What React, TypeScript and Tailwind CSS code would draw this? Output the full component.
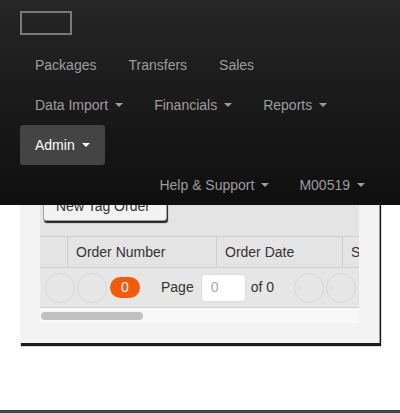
import type { ReactNode } from "react"

function Caret() {
  return <span className="ml-[7px] inline-block h-0 w-0 border-x-4 border-t-4 border-x-transparent border-t-current align-middle" />
}

function NavItem({ children, active, dropdown }: { children: ReactNode; active?: boolean; dropdown?: boolean }) {
  return (
    <div
      className={
        active
          ? "flex h-10 items-center whitespace-nowrap rounded-[3px] bg-[#444444] px-[15px] text-white"
          : "flex h-10 items-center whitespace-nowrap px-[15px] text-[#9d9d9d]"
      }
    >
      {children}
      {dropdown && <Caret />}
    </div>
  )
}

function Circle() {
  return <div className="h-[30px] w-[30px] shrink-0 rounded-full border border-[#d6d6d6]" />
}

export default function App() {
  return (
    <div className="relative h-[413px] w-[400px] overflow-hidden bg-white font-['Liberation_Sans',Arial,sans-serif] text-[14px]">
      <nav className="relative z-10 h-[205px] bg-gradient-to-b from-[#262626] to-[#0f0f0f] px-5">
        <div className="pt-[11px]">
          <div className="h-6 w-[52px] border-2 border-[#7a7a7a]" />
        </div>
        <div className="mt-[10px] flex">
          <NavItem>Packages</NavItem>
          <div className="ml-[2px]">
            <NavItem>Transfers</NavItem>
          </div>
          <div className="ml-[2px]">
            <NavItem>Sales</NavItem>
          </div>
        </div>
        <div className="flex">
          <NavItem dropdown>Data Import</NavItem>
          <div className="ml-[1px]">
            <NavItem dropdown>Financials</NavItem>
          </div>
          <div className="ml-[1px]">
            <NavItem dropdown>Reports</NavItem>
          </div>
        </div>
        <div className="flex">
          <NavItem active dropdown>Admin</NavItem>
        </div>
        <div className="flex justify-end">
          <NavItem dropdown>Help &amp; Support</NavItem>
          <NavItem dropdown>M00519</NavItem>
        </div>
      </nav>

      <div className="-mt-[30px] px-5">
        <div className="border-r border-[#9a9a9a] bg-[#f3f3f3] px-5 pb-[20px] shadow-[1px_3px_1px_rgba(0,0,0,0.9)]">
          <div className="overflow-hidden bg-[#e4e4e4]">
            <div className="px-[3px] pb-[15px] pt-[17px]">
              <button className="h-[29px] w-[124px] rounded-[3px] border border-[#a0a0a0] bg-[#f2f2f2] pl-[12px] text-left text-[#333] shadow-[1px_2px_1px_rgba(0,0,0,0.85)]">
                New Tag Order
              </button>
            </div>
            <div className="flex h-[32px] w-[400px] border-y border-[#cfcfcf] text-[#333]">
              <div className="w-[28px] shrink-0 border-r border-[#cfcfcf]" />
              <div className="flex w-[149px] shrink-0 items-center border-r border-[#cfcfcf] pl-2">Order Number</div>
              <div className="flex w-[126px] shrink-0 items-center border-r border-[#cfcfcf] pl-2">Order Date</div>
              <div className="flex items-center pl-2">Status</div>
            </div>
            <div className="flex h-[40px] w-[400px] items-center whitespace-nowrap border-b border-[#cfcfcf] bg-[#e6e6e6] pl-[5px] text-[#333]">
              <Circle />
              <div className="ml-[2px] shrink-0">
                <Circle />
              </div>
              <div className="ml-[3px] flex h-[21px] w-[30px] shrink-0 items-center justify-center rounded-full bg-[#f25a0c] text-white">0</div>
              <span className="ml-[21px] shrink-0">Page</span>
              <div className="ml-[7px] flex h-[28px] w-[45px] shrink-0 items-center rounded-[4px] border border-[#dddddd] bg-white pl-[9px] text-[#aaaaaa]">0</div>
              <span className="ml-[5px] shrink-0">of 0</span>
              <div className="ml-[20px] shrink-0">
                <Circle />
              </div>
              <div className="ml-[2px] shrink-0">
                <Circle />
              </div>
            </div>
          </div>
          <div className="h-[15px] bg-[#f8f8f8] pl-px pt-[4px]">
            <div className="h-2 w-[102px] rounded-full bg-[#c1c1c1]" />
          </div>
        </div>
      </div>

      <div className="absolute bottom-0 left-0 h-[3px] w-full bg-[#444444]" />
    </div>
  )
}
